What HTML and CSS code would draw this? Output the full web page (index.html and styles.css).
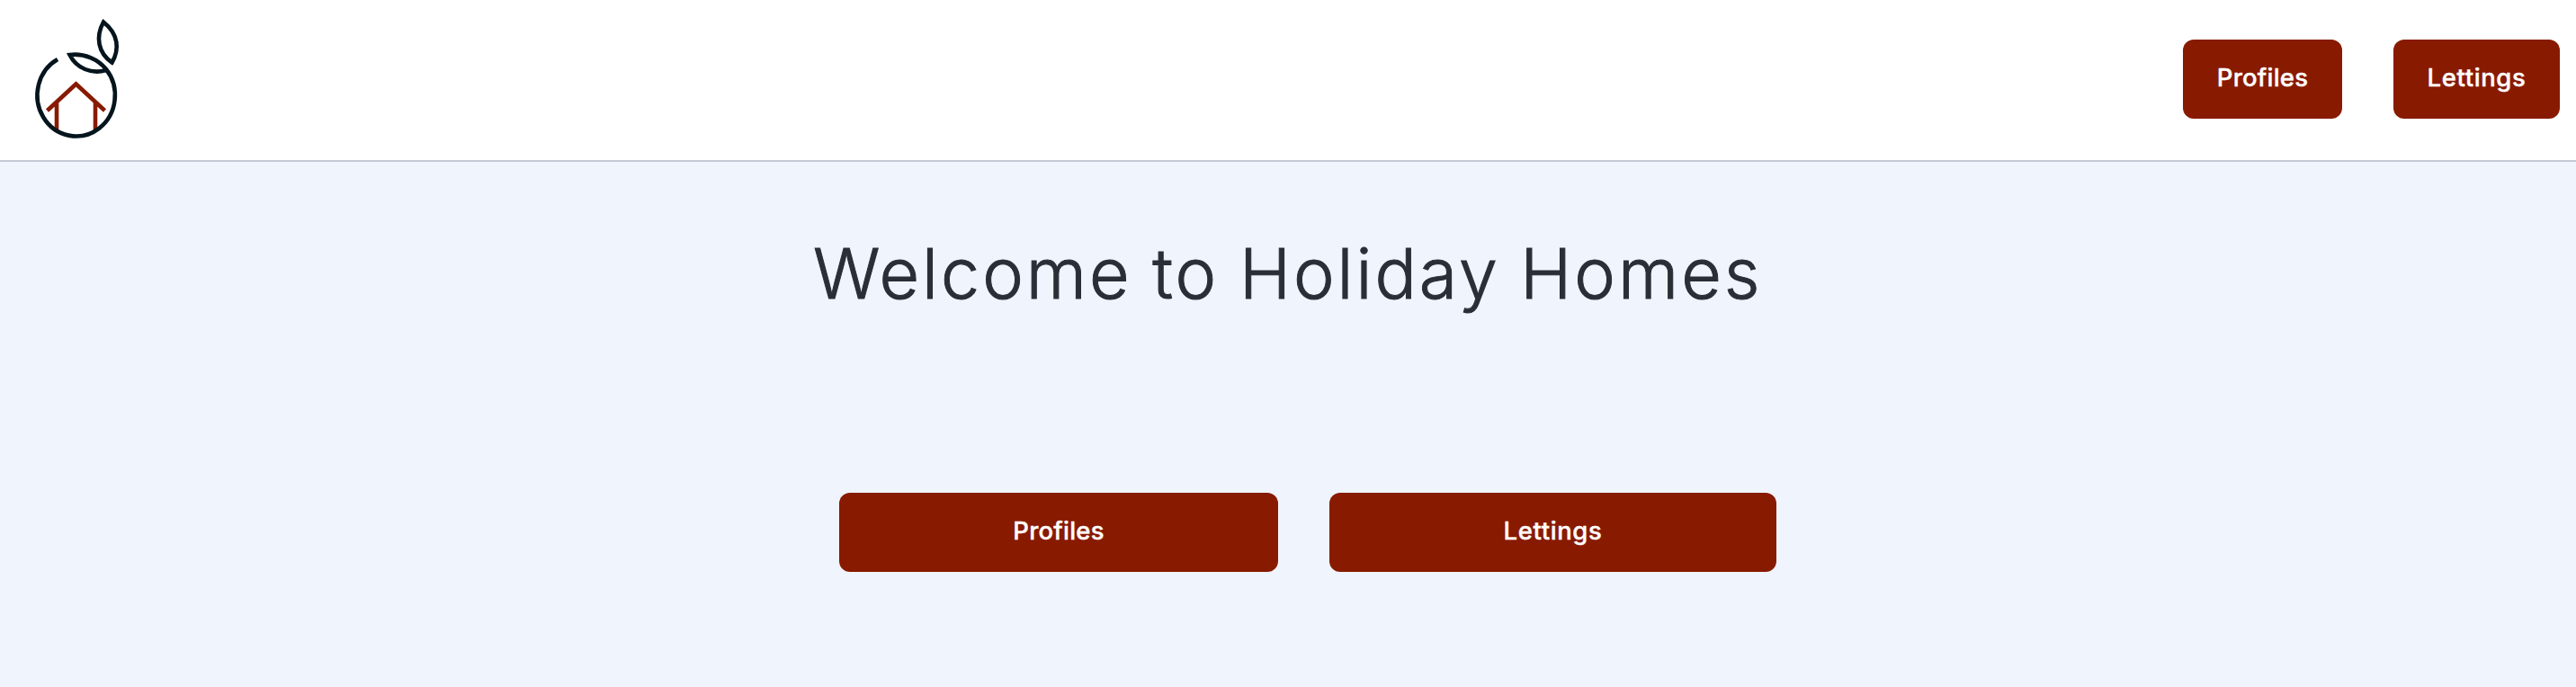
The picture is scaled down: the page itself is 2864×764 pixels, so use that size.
FILE: index.html
```html
<!DOCTYPE html>
<html lang="en">
<head>
<meta charset="utf-8">
<title>Holiday Homes</title>
<link rel="stylesheet" href="styles.css">
</head>
<body>
<header class="header">
  <a class="logo" href="#" aria-label="Holiday Homes">
    <svg width="140" height="178" viewBox="0 0 140 178" fill="none" stroke-width="4.600">
      <path class="house" d="M52.500 123L84.500 93.500L116.500 123M63 114V145M106 114V145"/>
      <path class="fruit" d="M64 66A43.200 45.500 0 1 0 118 77C109 66 94 59 77.500 61C85 76 102 83 118 78"/>
      <path class="fruit" d="M115 24.500C106 41 109 59 124.500 69.500C133 55 132 38 115 24.500Z"/>
    </svg>
  </a>
  <nav class="nav">
    <a class="button nav-profiles" href="#"><span class="profiles-text">Profiles</span></a>
    <a class="button nav-lettings" href="#"><span class="lettings-text">Lettings</span></a>
  </nav>
</header>
<main class="main">
  <h1 class="title">Welcome to Holiday Homes</h1>
  <div class="actions">
    <a class="button main-profiles" href="#"><span class="profiles-text">Profiles</span></a>
    <a class="button main-lettings" href="#"><span class="lettings-text">Lettings</span></a>
  </div>
</main>
</body>
</html>
```
FILE: styles.css
```css
* { box-sizing: border-box; }
body { margin: 0; min-height: 764px; background: #f0f4fc; font-family: Inter, sans-serif; }
.header { display: flex; justify-content: space-between; height: 180px; padding-right: 18px; background: #fff; border-bottom: 2px solid #c5c9d6; }
.logo { display: block; height: 178px; }
.logo svg { display: block; }
.house { stroke: #881a00; }
.fruit { stroke: #05151d; }
.nav { display: flex; gap: 57px; padding-top: 44px; }
.button { display: flex; align-items: center; justify-content: center; height: 88px; padding-bottom: 4px; border-radius: 12px; background: #881a00; color: #fff; font-size: 27.5px; font-weight: 500; line-height: 40px; text-decoration: none; -webkit-text-stroke: 0.4px currentColor; }
.nav-profiles { width: 177px; }
.nav-lettings { width: 185px; }
.main { display: flex; flex-direction: column; }
.title { margin: 0 0 0 904px; padding-top: 76px; color: #2a2e37; font-size: 77px; font-weight: 300; line-height: 96px; letter-spacing: 3px; word-spacing: -2px; white-space: nowrap; -webkit-text-stroke: 1px currentColor; }
.actions { display: flex; gap: 57px; padding: 196px 0 0 933px; }
.main-profiles { width: 488px; }
.main-lettings { width: 497px; }
.profiles-text { letter-spacing: 0.2px; }
.lettings-text { letter-spacing: 0.6px; }
```
